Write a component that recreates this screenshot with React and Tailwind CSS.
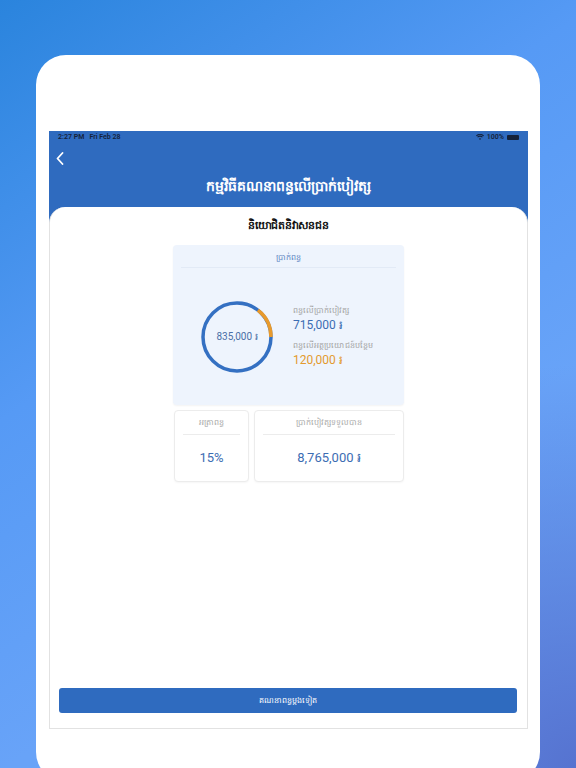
import React from "react";

const Ring = () => {
  const r = 34;
  const c = 2 * Math.PI * r;
  const orange = 120000 / 835000;
  return (
    <svg width="74" height="74" viewBox="0 0 74 74" className="absolute inset-0">
      <circle cx="37" cy="37" r={r} fill="none" stroke="#3470c2" strokeWidth="3.5" />
      <circle
        cx="37"
        cy="37"
        r={r}
        fill="none"
        stroke="#e89a2c"
        strokeWidth="3.5"
        strokeDasharray={`${c * orange} ${c}`}
        transform="rotate(-52 37 37)"
      />
    </svg>
  );
};

const StatCard = ({ title, value, className }) => (
  <div className={`bg-white border border-[#ececec] rounded-[4px] shadow-[0_1px_2px_rgba(0,0,0,0.04)] h-[72px] flex flex-col ${className}`}>
    <div className="h-[23px] flex items-center justify-center text-[8px] text-[#a8a8a8]">{title}</div>
    <div className="mx-[8px] h-px bg-[#ececec]" />
    <div className="flex-1 flex items-center justify-center text-[13px] text-[#3c6db3] font-['Roboto','Noto_Sans',sans-serif]">
      {value}
    </div>
  </div>
);

export default function App() {
  return (
    <div className="w-[576px] h-[768px] overflow-hidden bg-[radial-gradient(circle_at_100%_100%,#5673d0_0%,rgba(86,115,208,0)_42%),linear-gradient(145deg,#2a84dd_0%,#569af5_36%,#68a3f8_66%,#6aa4f8_100%)] font-['Roboto','Noto_Sans',sans-serif]">
      <div className="pt-[55px] pl-[36px] pr-[36px]">
        <div className="bg-white rounded-[30px] h-[727px] pt-[76px] pl-[13px] pr-[12px]">
          <div className="h-[598px] bg-[#2f6bbf] flex flex-col">
            <div className="h-[12px] flex items-center justify-between px-[9px] text-[7px] font-semibold text-[#14213a]">
              <span>2:27 PM&nbsp;&nbsp;&nbsp;Fri Feb 28</span>
              <span className="flex items-center gap-[3px]">
                <svg width="8" height="6" viewBox="0 0 16 12" fill="#14213a">
                  <path d="M8 12l2.2-2.6a3.4 3.4 0 0 0-4.4 0z" />
                  <path d="M3.8 7.2a6.2 6.2 0 0 1 8.4 0l1.4-1.6a8.4 8.4 0 0 0-11.2 0z" />
                  <path d="M1.4 4.4a9.8 9.8 0 0 1 13.2 0L16 2.8a12 12 0 0 0-16 0z" />
                </svg>
                <span>100%</span>
                <span className="w-[12px] h-[5px] bg-[#14213a] rounded-[1px]" />
              </span>
            </div>
            <div className="h-[64px] relative">
              <svg width="8" height="13" viewBox="0 0 8 13" className="absolute left-[7px] top-[9px]">
                <path d="M6.5 1L1.5 6.5L6.5 12" fill="none" stroke="white" strokeWidth="1.8" strokeLinecap="round" strokeLinejoin="round" />
              </svg>
              <div className="absolute left-0 right-0 top-[33px] text-center text-white text-[14px] font-bold leading-[20px]">
                កម្មវិធីគណនាពន្ធលើប្រាក់បៀវត្ស
              </div>
            </div>
            <div className="flex-1 bg-white rounded-t-[16px] border-x border-b border-[#e2e2e2] flex flex-col items-center pt-[11px]">
              <div className="text-[11px] font-bold text-[#111] leading-[16px]">និយោជិតនិវាសនជន</div>
              <div className="mt-[11px] w-[231px] h-[160px] bg-[#eef4fd] rounded-[4px] shadow-[0_1px_2px_rgba(0,0,0,0.05)] flex flex-col">
                <div className="h-[22px] flex items-center justify-center text-[8px] text-[#5d86c3] pt-[4px]">ប្រាក់ពន្ធ</div>
                <div className="mx-[8px] h-px bg-[#e2eaf6]" />
                <div className="flex-1 flex items-center pl-[27px]">
                  <div className="relative w-[74px] h-[74px] flex items-center justify-center">
                    <Ring />
                    <span className="text-[10px] text-[#4a6fa6]">835,000 ៛</span>
                  </div>
                  <div className="ml-[19px] flex flex-col">
                    <span className="text-[8px] text-[#a3a3a3] leading-[12px]">ពន្ធលើប្រាក់បៀវត្ស</span>
                    <span className="text-[12px] text-[#3c6db3] leading-[16px]">715,000 ៛</span>
                    <span className="mt-[7px] text-[8px] text-[#a3a3a3] leading-[12px]">ពន្ធលើអត្ថប្រយោជន៍បន្ថែម</span>
                    <span className="text-[12px] text-[#e39a2e] leading-[16px]">120,000 ៛</span>
                  </div>
                </div>
              </div>
              <div className="mt-[5px] flex gap-[5px] pl-[1px]">
                <StatCard title="អត្រាពន្ធ" value="15%" className="w-[75px]" />
                <StatCard title="ប្រាក់បៀវត្សទទួលបាន" value="8,765,000 ៛" className="w-[150px]" />
              </div>
              <div className="flex-1" />
              <div className="self-stretch ml-[9px] mr-[10px] mb-[15px] h-[25px] bg-[#2f6bbf] rounded-[3px] flex items-center justify-center text-[8px] text-white">
                គណនាពន្ធម្តងទៀត
              </div>
            </div>
          </div>
        </div>
      </div>
    </div>
  );
}
